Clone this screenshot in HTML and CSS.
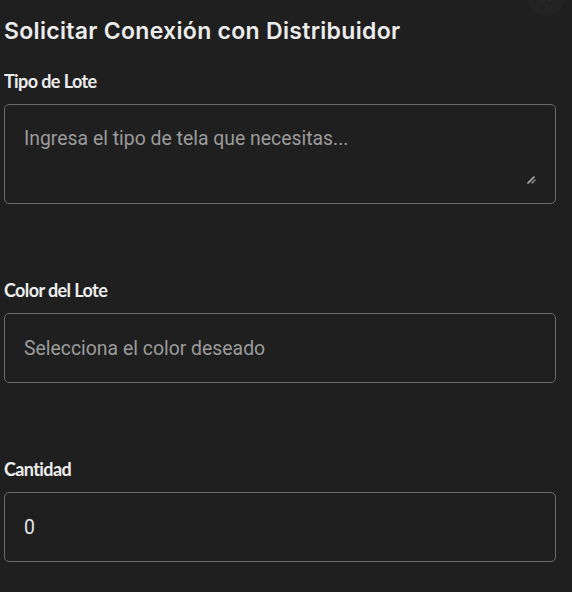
FILE: index.html
```html
<!DOCTYPE html>
<html lang="es">
<head>
<meta charset="utf-8">
<title>Solicitar Conexión con Distribuidor</title>
<link rel="stylesheet" href="styles.css">
</head>
<body>
<div class="dialog">
  <button class="close" aria-label="Cerrar"><span class="close-x">×</span></button>
  <h2 class="title">Solicitar Conexión con Distribuidor</h2>
  <div class="field">
    <label class="label" for="tipo">Tipo de Lote</label>
    <div class="area-wrap">
      <textarea id="tipo" class="control area" placeholder="Ingresa el tipo de tela que necesitas..."></textarea>
      <svg class="grip" width="9" height="9" viewBox="0 0 9 9" aria-hidden="true">
        <path d="M1 8 L7 2" stroke="#b5b5b5" stroke-width="1.6" stroke-linecap="round"/>
        <path d="M5 8 L8 5" stroke="#9a9a9a" stroke-width="1.2" stroke-linecap="round"/>
      </svg>
    </div>
  </div>
  <div class="field">
    <label class="label" for="color">Color del Lote</label>
    <input id="color" class="control" type="text" placeholder="Selecciona el color deseado">
  </div>
  <div class="field">
    <label class="label" for="cantidad">Cantidad</label>
    <input id="cantidad" class="control value" type="text" value="0">
  </div>
</div>
</body>
</html>
```

FILE: styles.css
```css
html, body {
  margin: 0;
  padding: 0;
  background: #1f1f1f;
  color-scheme: dark;
  overflow: hidden;
}

.dialog {
  position: relative;
  padding: 0 16px 0 4px;
}

.close {
  position: absolute;
  top: -22px;
  left: 527px;
  width: 38px;
  height: 38px;
  border: none;
  border-radius: 50%;
  background: #232323;
  padding: 0;
  overflow: hidden;
}

.close-x {
  position: absolute;
  left: 0;
  right: 0;
  top: 10px;
  color: #777;
  font: 400 16px/16px "DejaVu Sans", sans-serif;
  text-align: center;
}

.title {
  margin: 0;
  padding-top: 16px;
  font: 600 23px/30px "Inter", sans-serif;
  letter-spacing: 0.3px;
  color: #ececec;
}

.field {
  display: flex;
  flex-direction: column;
  margin-top: 24px;
}

.field + .field {
  margin-top: 75px;
}

.label {
  font: 700 18px/22px "Lato", sans-serif;
  letter-spacing: -0.6px;
  color: #ededed;
  margin-bottom: 12px;
}

.area-wrap {
  position: relative;
  display: flex;
}

.grip {
  position: absolute;
  left: 523px;
  top: 71px;
}

.control {
  box-sizing: border-box;
  width: 552px;
  height: 70px;
  margin: 0;
  padding: 0 19px;
  border: 1px solid #6a6a6a;
  border-radius: 5px;
  background: #1f1f1f;
  color: #e4e4e4;
  font: 400 19.4px "Roboto", sans-serif;
  outline: none;
}

.control::placeholder {
  color: #9b9b9b;
}

.area {
  height: 100px;
  padding: 23px 19px;
  line-height: 22px;
  resize: none;
}

.value {
  color: #e0e6ea;
}
```
